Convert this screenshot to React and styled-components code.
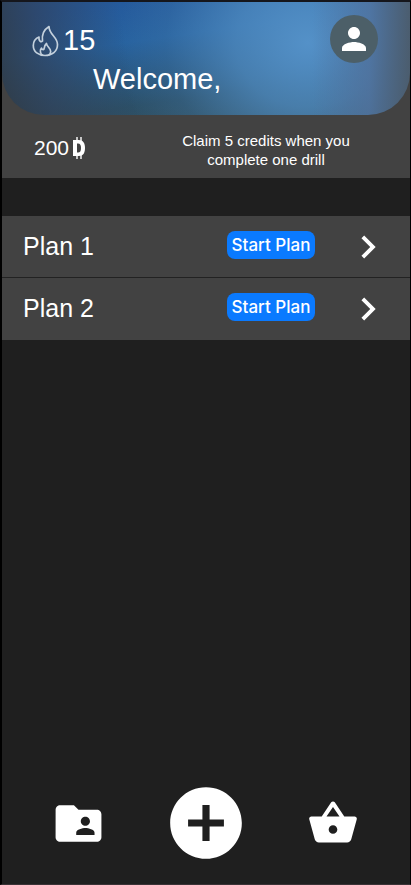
import React from "react";
import styled, { createGlobalStyle } from "styled-components";
import {
  MdAddCircle,
  MdChevronRight,
  MdFolderShared,
  MdPerson,
  MdShoppingBasket,
} from "react-icons/md";

const GlobalStyle = createGlobalStyle`
  *, *::before, *::after { box-sizing: border-box; }
  body {
    margin: 0;
    background: #1f1f1f;
    color: #fff;
    font-family: "Liberation Sans", Arial, sans-serif;
  }
  button { font: inherit; color: inherit; border: 0; padding: 0; cursor: pointer; }
  svg { display: block; flex: none; }
`;

const Screen = styled.div`
  display: flex;
  flex-direction: column;
  min-height: 100vh;
  border: solid #000;
  border-width: 2px 1px 1px 2px;
  border-top-color: #15161c;
  border-bottom-color: #3a3236;
`;

const Top = styled.div`
  background: #424242;
`;

const Header = styled.header`
  display: flex;
  justify-content: space-between;
  align-items: flex-start;
  padding: 13px 32px 18px 30px;
  border-radius: 0 0 42px 42px;
  background:
    linear-gradient(90deg, rgba(82, 115, 160, 0) 76%, rgba(82, 112, 155, 0.7) 90%, rgba(76, 92, 108, 0.95) 100%),
    radial-gradient(ellipse 190px 170px at 75% 36%, #5491c8 0%, rgba(80, 140, 194, 0.75) 38%, rgba(70, 125, 175, 0.25) 75%, rgba(70, 125, 175, 0) 100%),
    linear-gradient(80deg, rgba(48, 58, 68, 0.9) 0%, rgba(50, 60, 80, 0.6) 12%, rgba(48, 62, 84, 0) 32%),
    linear-gradient(172deg, #255a9c 10%, #27629f 34%, #2c5068 72%, #34525e 96%);
`;

const Greeting = styled.div`
  display: flex;
  flex-direction: column;
  gap: 4px;
  padding-top: 8px;
  font-size: 29px;
  line-height: 35px;
`;

const Streak = styled.div`
  display: flex;
  align-items: center;
  gap: 4px;
`;

const Title = styled.h1`
  margin: 0;
  padding-left: 61px;
  font: inherit;
`;

const Avatar = styled.button`
  display: grid;
  place-items: center;
  width: 48px;
  height: 48px;
  border-radius: 50%;
  background: #4c5f68;
`;

const Credits = styled.section`
  display: flex;
  justify-content: space-between;
  align-items: center;
  height: 63px;
  padding: 6px 52px 0 32px;
`;

const Balance = styled.div`
  display: flex;
  align-items: center;
  gap: 2px;
  padding-bottom: 4px;
  font-size: 21px;
  line-height: 24px;
`;

const Hint = styled.p`
  margin: 0;
  width: 184px;
  font-size: 15px;
  line-height: 19px;
  text-align: center;
`;

const Plans = styled.ul`
  list-style: none;
  margin: 38px 0 0;
  padding: 0;
`;

const PlanRow = styled.li`
  display: flex;
  align-items: center;
  height: 62px;
  padding: 0 19px 0 21px;
  background: #424242;
  &:not(:last-child) { border-bottom: 1px solid #222; }
`;

const PlanName = styled.span`
  flex: 1;
  padding-bottom: 2px;
  font-size: 25px;
  line-height: 30px;
`;

const StartButton = styled.button`
  width: 88px;
  height: 28px;
  margin: 0 30px 4px 0;
  border-radius: 8px;
  background: #0a7aff;
  && {
    font-family: Inter, sans-serif;
    font-size: 17px;
    font-weight: 500;
    line-height: 28px;
    white-space: nowrap;
  }
`;

const IconButton = styled.button`
  display: grid;
  place-items: center;
  background: none;
`;

const TabBar = styled.nav`
  display: grid;
  grid-template-columns: repeat(3, 1fr);
  align-items: center;
  margin-top: auto;
  padding: 0 14px 18px 13px;
`;

function Flame() {
  return (
    <svg width="27" height="32" viewBox="0 0 27 32" fill="none" stroke="#c3d0dc" strokeWidth="1.700" strokeLinejoin="round" aria-hidden="true">
      <path d="M17 1.500C13 4 9.500 9 10.500 16C9 17.500 6.500 16 7 12C3.500 13.500 1.300 16.500 1.300 20.500C1.300 27 6.500 30.500 13 30.500C20 30.500 25.500 26.500 25.500 19.500C25.500 12 17 9.500 17 1.500Z" />
      <path d="M10.500 30.300C8 28.500 7.700 25 9.500 23.200C10 24.600 11.300 25.200 12 24C12 21.500 13 19.800 14.500 18.500C14.800 21.800 18.700 23 18.700 26.500C18.700 28.300 17.800 29.500 16.500 30.300" />
    </svg>
  );
}

function Coin() {
  return (
    <svg width="17" height="22" viewBox="0 0 17 22" aria-hidden="true">
      <path fill="#fff" fillRule="evenodd" d="M2 3H8C12 3 14 6 14 11S12 19 8 19H2ZM6 6.500V15.500H7C9.200 15.500 10 14 10 11S9.200 6.500 7 6.500Z" />
      <path fill="none" stroke="#fff" strokeWidth="1.400" d="M6 0V4M10 0V4M6 18V22M10 18V22" />
    </svg>
  );
}

const plans = ["Plan 1", "Plan 2"];

export default function App() {
  return (
    <>
      <GlobalStyle />
      <Screen>
        <Top>
          <Header>
            <Greeting>
              <Streak><Flame />15</Streak>
              <Title>Welcome,</Title>
            </Greeting>
            <Avatar aria-label="Profile"><MdPerson size={36} /></Avatar>
          </Header>
          <Credits>
            <Balance>200<Coin /></Balance>
            <Hint>Claim 5 credits when you complete one drill</Hint>
          </Credits>
        </Top>
        <Plans>
          {plans.map((name) => (
            <PlanRow key={name}>
              <PlanName>{name}</PlanName>
              <StartButton>Start Plan</StartButton>
              <IconButton aria-label={`Open ${name}`}><MdChevronRight size={46} /></IconButton>
            </PlanRow>
          ))}
        </Plans>
        <TabBar>
          <IconButton aria-label="Shared folder"><MdFolderShared size={55} /></IconButton>
          <IconButton aria-label="Add"><MdAddCircle size={86} /></IconButton>
          <IconButton aria-label="Shop"><MdShoppingBasket size={52} /></IconButton>
        </TabBar>
      </Screen>
    </>
  );
}
